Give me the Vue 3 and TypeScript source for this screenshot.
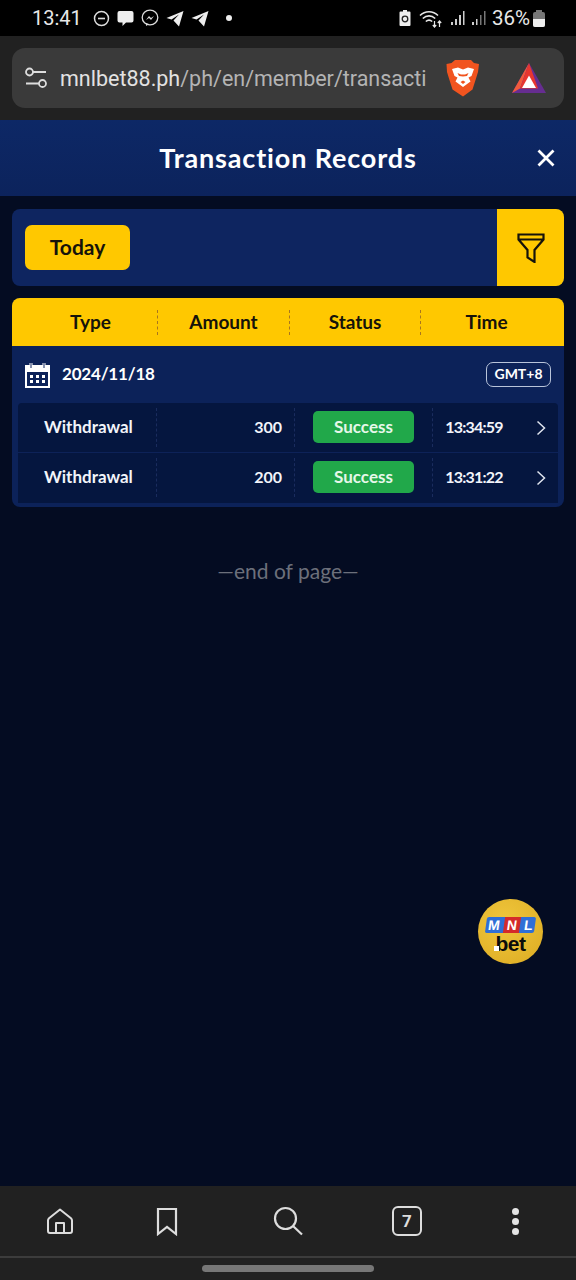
<script setup lang="ts">
interface Tx {
  type: string
  amount: number
  status: string
  time: string
}

const columns = ['Type', 'Amount', 'Status', 'Time']

const rows: Tx[] = [
  { type: 'Withdrawal', amount: 300, status: 'Success', time: '13:34:59' },
  { type: 'Withdrawal', amount: 200, status: 'Success', time: '13:31:22' },
]
</script>

<template>
  <div class="phone">
    <div class="status-bar">
      <div class="sb-left">
        <span class="clock">13:41</span>
        <svg width="17" height="17" viewBox="0 0 17 17"><circle cx="8.5" cy="8.5" r="7" fill="none" stroke="#ddd" stroke-width="1.5" /><rect x="5" y="7.7" width="7" height="1.6" fill="#ddd" /></svg>
        <svg width="17" height="17" viewBox="0 0 17 17"><path d="M2.500 1h12a2 2 0 0 1 2 2v7.500a2 2 0 0 1-2 2H9L5.500 16v-3.500h-3a2 2 0 0 1-2-2V3a2 2 0 0 1 2-2z" fill="#eee" /></svg>
        <svg width="18" height="18" viewBox="0 0 18 18"><ellipse cx="9" cy="8.500" rx="7.800" ry="7.300" fill="none" stroke="#ddd" stroke-width="1.300" /><path d="M5 11l3-4 2 2 3-2-3 4-2-2z" fill="#ddd" /><path d="M5 14v3l3-2z" fill="#ddd" /></svg>
        <svg width="18" height="17" viewBox="0 0 18 17"><path d="M17.500 1L0.500 8l5 1.500L13 4.500 7.500 10.500 13 16.500z" fill="#eee" /></svg>
        <svg width="18" height="17" viewBox="0 0 18 17"><path d="M17.500 1L0.500 8l5 1.500L13 4.500 7.500 10.500 13 16.500z" fill="#eee" /></svg>
        <span class="dot"></span>
      </div>
      <div class="sb-right">
        <svg width="12" height="16" viewBox="0 0 12 16"><path d="M4 0h4v1.500h2.500a1 1 0 0 1 1 1V15a1 1 0 0 1-1 1h-9a1 1 0 0 1-1-1V2.500a1 1 0 0 1 1-1H4z" fill="#eee" /><circle cx="6" cy="9" r="2.800" fill="none" stroke="#222" stroke-width="1.300" /></svg>
        <svg class="wifi" width="25" height="19" viewBox="0 0 25 19"><path d="M1 6.500C6 1.500 14 1.500 19 6.500M3.800 9.500C7.500 6 12.500 6 16.200 9.500M6.800 12.500C8.800 10.800 11.200 10.800 13.200 12.500" fill="none" stroke="#e6e6e6" stroke-width="1.600" /><path d="M15.500 12v6M13.800 16l1.700 2 1.700-2M20.500 18v-6M18.800 14l1.700-2 1.700 2" fill="none" stroke="#e6e6e6" stroke-width="1.200" /></svg>
        <svg width="15" height="15" viewBox="0 0 15 15"><path d="M1 11h2v3H1zM5 8h2v6H5zM9 4h2v10H9zM13 0h1.500v14H13z" fill="#ccc" /></svg>
        <svg width="15" height="15" viewBox="0 0 15 15"><path d="M1 11h2v3H1zM5 8h1.500v6H5z" fill="#ccc" /><path d="M9 4h1.500v10H9zM13 0h1.500v14H13z" fill="#777" /></svg>
        <span class="battery-text">36%</span>
        <span class="battery"><span class="battery-fill"></span></span>
      </div>
    </div>

    <div class="toolbar">
      <div class="url-bar">
        <svg class="tune" width="24" height="22" viewBox="0 0 24 22"><circle cx="5.500" cy="5" r="3.500" fill="none" stroke="#ddd" stroke-width="1.800" /><path d="M9 5h13M2 16.500h13" stroke="#ddd" stroke-width="1.800" /><circle cx="18.500" cy="16.500" r="3.500" fill="none" stroke="#ddd" stroke-width="1.800" /></svg>
        <div class="url"><span class="host">mnlbet88.ph</span>/ph/en/member/transacti</div>
        <svg class="brave" width="34" height="38" viewBox="0 0 34 38">
          <path d="M9 1h16l3 3 5 1-1 8-2 6.500-3.500 11L17 37.500 6.500 30.500 3 19.500 1 13 0.500 5l5-1z" fill="#f1541f" />
          <path d="M6 10l6-1.500 5 2 5-2 6 1.500-2.500 7-3 1.500 2 4-7.500 5.500-7.500-5.500 2-4-3-1.500z" fill="#fff" />
          <path d="M11.500 14l3.500 1.500h4l3.500-1.500-1.500 3-4 .500-4-.500zM14.500 23l2.500-1.500 2.500 1.500-2.500 2z" fill="#f1541f" />
        </svg>
        <svg class="bat" width="36" height="32" viewBox="0 0 36 32">
          <path d="M18 1L35 31H1z" fill="#662d91" />
          <path d="M18 1L1 31 9 26.500z" fill="#f15a3c" />
          <path d="M18 1L9 26.500h18z" fill="#e8362f" />
          <path d="M18 13.500l7 12.500H11z" fill="#fff" />
        </svg>
      </div>
    </div>

    <header class="page-head">
      <h1>Transaction Records</h1>
      <svg class="close" width="20" height="20" viewBox="0 0 20 20"><path d="M2.500 2.500l15 15M17.500 2.500l-15 15" stroke="#fff" stroke-width="2.800" /></svg>
    </header>

    <main class="content">
      <div class="filter-card">
        <button class="today">Today</button>
        <div class="filter-btn">
          <svg width="28" height="30" viewBox="0 0 28 30"><path d="M1.500 1.500h25v5l-9 10.500v12l-7-4.500v-7.500l-9-10.500zM1.500 6.500h25" fill="none" stroke="#16130a" stroke-width="2.200" /></svg>
        </div>
      </div>

      <div class="table">
        <div class="thead">
          <div v-for="c in columns" :key="c" class="th">{{ c }}</div>
        </div>
        <div class="date-row">
          <svg width="25" height="26" viewBox="0 0 25 26">
            <path d="M1 4h23v21H1z" fill="none" stroke="#fff" stroke-width="2" />
            <path d="M1 4h23v6H1z" fill="#fff" />
            <path d="M6 1v6M19 1v6" stroke="#fff" stroke-width="3" />
            <path d="M6 1v5M19 1v5" stroke="#0e2560" stroke-width="1" />
            <path d="M5 13h3v3H5zM11 13h3v3h-3zM17 13h3v3h-3zM5 18h3v3H5zM11 18h3v3h-3zM17 18h3v3h-3z" fill="#fff" />
          </svg>
          <span class="date">2024/11/18</span>
          <span class="gmt">GMT+8</span>
        </div>
        <div class="tbody">
          <div v-for="r in rows" :key="r.time" class="tr">
            <div class="td td-type">{{ r.type }}</div>
            <div class="td td-amount">{{ r.amount }}</div>
            <div class="td td-status"><span class="badge">{{ r.status }}</span></div>
            <div class="td td-time">
              <span class="time">{{ r.time }}</span>
              <svg width="10" height="16" viewBox="0 0 10 16"><path d="M1.500 1.500L8.500 8l-7 6.500" fill="none" stroke="#dfe4ee" stroke-width="1.500" /></svg>
            </div>
          </div>
        </div>
      </div>

      <div class="end">—end of page—</div>

      <div class="float-logo">
        <div class="mnl"><span>M</span><span class="red">N</span><span>L</span></div>
        <div class="bet"><i class="bet-dot"></i>bet</div>
      </div>
    </main>

    <nav class="bottom-nav">
      <div class="nav-icons">
        <svg width="30" height="30" viewBox="0 0 30 30"><path d="M3 14.500a3 3 0 0 1 1-2.300L15 3.500l11 8.700a3 3 0 0 1 1 2.300V25a2 2 0 0 1-2 2H5a2 2 0 0 1-2-2zM11 27V17h8v10" fill="none" stroke="#ddd" stroke-width="2" stroke-linejoin="round" /></svg>
        <svg width="30" height="30" viewBox="0 0 30 30"><path d="M6 3h18v25l-9-7-9 7z" fill="none" stroke="#ddd" stroke-width="2.200" /></svg>
        <svg width="32" height="32" viewBox="0 0 32 32"><circle cx="13.500" cy="13.500" r="10.500" fill="none" stroke="#ddd" stroke-width="2.200" /><path d="M21 21l9 8.500" stroke="#ddd" stroke-width="2.200" /></svg>
        <div class="tabs">7</div>
        <div class="more"><i></i><i></i><i></i></div>
      </div>
      <div class="gesture"><span></span></div>
    </nav>
  </div>
</template>

<style scoped>
.phone {
  width: 576px;
  height: 1280px;
  display: flex;
  flex-direction: column;
  background: #040c22;
  font-family: Lato, "Liberation Sans", sans-serif;
  overflow: hidden;
}
.status-bar {
  height: 36px;
  flex: none;
  background: #000;
  display: flex;
  align-items: center;
  justify-content: space-between;
  padding: 0 31px 0 32px;
  color: #e8e8e8;
}
.sb-left,
.sb-right {
  display: flex;
  align-items: center;
}
.sb-left { gap: 7px; }
.sb-right { gap: 6px; }
.clock {
  font-family: Roboto, sans-serif;
  font-size: 20px;
  margin-right: 4px;
}
.dot {
  width: 6px;
  height: 6px;
  border-radius: 50%;
  background: #eee;
  margin-left: 10px;
}
.wifi { margin-left: 2px; }
.battery-text {
  font-family: Roboto, sans-serif;
  font-size: 20.500px;
}
.battery {
  width: 12px;
  height: 15px;
  margin: 2px 0 0 -3px;
  background: #777;
  border-radius: 2px;
  display: flex;
  align-items: flex-end;
  position: relative;
}
.battery::before {
  content: "";
  position: absolute;
  left: 3px;
  top: -2px;
  width: 6px;
  height: 2px;
  background: #777;
}
.battery-fill {
  display: block;
  width: 100%;
  height: 8px;
  background: #eee;
  border-radius: 0 0 2px 2px;
}
.toolbar {
  height: 84px;
  flex: none;
  background: #212121;
  padding: 12px;
  box-sizing: border-box;
}
.url-bar {
  height: 60px;
  background: #3a3a3a;
  border-radius: 13px;
  display: flex;
  align-items: center;
  padding-left: 12px;
  color: #b4b4b4;
}
.tune { flex: none; }
.url {
  font-family: Roboto, sans-serif;
  font-size: 21.500px;
  width: 370px;
  margin-left: 12px;
  white-space: nowrap;
}
.host { color: #e2e2e2; }
.brave { margin-left: 16px; flex: none; }
.bat { margin-left: 31px; flex: none; }
.page-head {
  height: 76px;
  flex: none;
  background: linear-gradient(#0d2866, #0c235c);
  display: flex;
  align-items: center;
  justify-content: center;
  position: relative;
}
.page-head h1 {
  margin: 0 0 2px;
  color: #fff;
  font-size: 27px;
  font-weight: 700;
  letter-spacing: 0.85px;
}
.close {
  position: absolute;
  right: 20px;
  top: 28px;
}
.content {
  flex: 1;
  position: relative;
  padding: 13px 12px 0;
  background: #040c22;
}
.filter-card {
  height: 77px;
  background: #0e2560;
  border-radius: 8px;
  display: flex;
  align-items: center;
  justify-content: space-between;
  overflow: hidden;
  padding-left: 13px;
}
.today {
  width: 105px;
  height: 45px;
  border: 0;
  border-radius: 7px;
  background: #ffc800;
  color: #16130a;
  font: 700 21px Lato, sans-serif;
  padding: 0 0 2px;
}
.filter-btn {
  width: 67px;
  height: 100%;
  background: #ffc800;
  display: flex;
  align-items: center;
  justify-content: center;
}
.table {
  margin-top: 12px;
  background: #0c2259;
  border-radius: 8px;
  padding-bottom: 4px;
  overflow: hidden;
}
.thead {
  height: 48px;
  background: #ffc800;
  padding: 0 12px;
  display: grid;
  grid-template-columns: 133px 132px 131px 132px;
  align-items: center;
}
.th {
  height: 25px;
  line-height: 23px;
  text-align: center;
  color: #16130a;
  font-size: 19px;
  font-weight: 700;
  border-left: 1px dashed #a9761e;
}
.th:first-child { border-left: 0; }
.date-row {
  height: 57px;
  padding: 0 13px;
  display: flex;
  align-items: center;
  color: #fff;
}
.date {
  margin: 0 0 3px 12px;
  font-size: 17px;
  font-weight: 700;
  letter-spacing: -0.2px;
}
.gmt {
  margin-left: auto;
  width: 65px;
  height: 25px;
  box-sizing: border-box;
  border: 1px solid #b9c4da;
  border-radius: 7px;
  font-size: 14px;
  font-weight: 700;
  text-align: center;
  line-height: 22px;
}
.tbody {
  margin: 0 6px;
  background: #05163f;
  border-radius: 4px 4px 0 0;
}
.tr {
  height: 50px;
  display: grid;
  grid-template-columns: 139px 138px 138px 125px;
  align-items: stretch;
  border-bottom: 1px solid #0d2258;
  box-sizing: border-box;
  color: #f2f4fa;
  font-size: 17px;
  font-weight: 700;
}
.tr:last-child {
  border-bottom: 0;
  padding-bottom: 1px;
}
.td {
  display: flex;
  align-items: center;
  border-right: 1px dashed #1a2c5e;
  margin: 5px 0;
}
.td-type { padding: 0 0 2px 26px; }
.td-amount {
  justify-content: flex-end;
  padding: 0 12px 2px 0;
  font-size: 16px;
}
.td-status { justify-content: center; }
.td-time {
  border-right: 0;
  padding: 0 12px 0 12px;
  justify-content: space-between;
  font-size: 16px;
  letter-spacing: -0.8px;
}
.time {
  width: 58px;
  text-align: center;
  margin-bottom: 2px;
}
.badge {
  width: 101px;
  height: 32px;
  margin-bottom: 1px;
  border-radius: 5px;
  background: #21a84a;
  color: #e6f7e9;
  font-size: 17px;
  font-weight: 700;
  text-align: center;
  line-height: 32px;
}
.end {
  margin-top: 51px;
  text-align: center;
  color: #6c707b;
  font-size: 21px;
}
.float-logo {
  position: absolute;
  left: 478px;
  top: 703px;
  width: 65px;
  height: 65px;
  padding-top: 5px;
  box-sizing: border-box;
  border-radius: 50%;
  background: radial-gradient(circle at 40% 35%, #f0c63c, #dcab22);
  display: flex;
  flex-direction: column;
  align-items: center;
  justify-content: center;
}
.mnl {
  display: flex;
  width: 49px;
  height: 16px;
  background: #2f6fd6;
  border-radius: 2px;
  transform: skewX(-8deg);
  color: #fff;
  font: 900 14px/16px "Liberation Sans", sans-serif;
  justify-content: space-around;
}
.mnl .red {
  background: #d42a2a;
  padding: 0 3px;
}
.bet {
  font: 900 21px/15px "Liberation Sans", sans-serif;
  letter-spacing: -0.5px;
  color: #0b0b0b;
  margin-top: 3px;
  position: relative;
}
.bet-dot {
  position: absolute;
  left: -2px;
  bottom: 0;
  width: 5px;
  height: 5px;
  background: #fff;
}
.bottom-nav {
  height: 94px;
  flex: none;
  background: #212121;
  display: flex;
  flex-direction: column;
}
.nav-icons {
  height: 72px;
  display: flex;
  align-items: center;
  padding-left: 45px;
  border-bottom: 2px solid #3c3c3c;
  box-sizing: border-box;
}
.nav-icons > :nth-child(2) { margin-left: 77px; }
.nav-icons > :nth-child(3) { margin-left: 90px; }
.nav-icons > :nth-child(4) { margin-left: 88px; }
.nav-icons > :nth-child(5) { margin-left: 90px; }
.tabs {
  width: 30px;
  height: 30px;
  box-sizing: border-box;
  border: 2px solid #ddd;
  border-radius: 6px;
  color: #ddd;
  font: 700 17px/26px Roboto, sans-serif;
  text-align: center;
}
.more {
  display: flex;
  flex-direction: column;
  gap: 3px;
  width: 8px;
}
.more i {
  display: block;
  width: 7px;
  height: 7px;
  border-radius: 50%;
  background: #e4e4e4;
}
.gesture {
  flex: 1;
  display: flex;
  justify-content: center;
  padding-top: 7px;
}
.gesture span {
  width: 172px;
  height: 7px;
  border-radius: 4px;
  background: #777;
}
</style>
